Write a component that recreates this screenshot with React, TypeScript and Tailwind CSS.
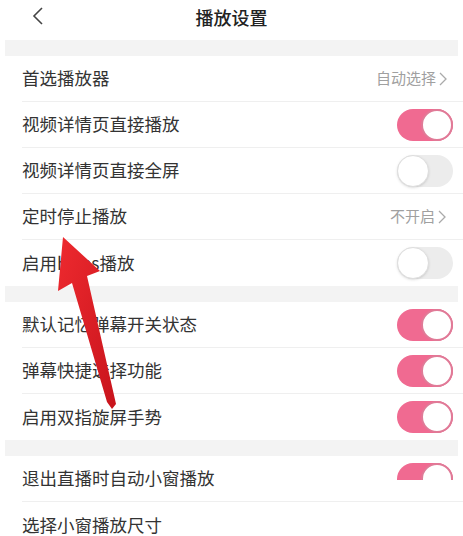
import React from "react";

function Toggle({ on }: { on: boolean }) {
  return on ? (
    <div className="relative w-[56px] h-[32px] rounded-full bg-[#f06a91]">
      <div className="absolute right-0 top-0 w-[32px] h-[32px] rounded-full bg-white border-2 border-[#e07a97]" />
    </div>
  ) : (
    <div className="relative w-[56px] h-[32px] rounded-full bg-[#ececec]">
      <div className="absolute left-0 top-0 w-[32px] h-[32px] rounded-full bg-white border border-[#dedede] shadow-sm" />
    </div>
  );
}

function Chevron() {
  return (
    <svg width="8" height="14" viewBox="0 0 8 14" className="ml-[3px]">
      <path d="M1 1 L7 7 L1 13" fill="none" stroke="#aaaaaa" strokeWidth="1.3" />
    </svg>
  );
}

function Row({
  label,
  right,
  last,
}: {
  label: string;
  right?: React.ReactNode;
  last?: boolean;
}) {
  return (
    <div className="pl-[22px]">
      <div
        className={`h-[46px] flex items-center justify-between pr-[10px] ${
          last ? "" : "border-b border-[#efefef]"
        }`}
      >
        <span className="text-[17.5px] text-[#333333]">{label}</span>
        {right}
      </div>
    </div>
  );
}

function Band() {
  return <div className="h-[16px] mx-[5px] bg-[#f3f3f3]" />;
}

export default function App() {
  return (
    <div
      className="relative w-[463px] h-[536px] overflow-hidden bg-white"
      style={{ fontFamily: '"Noto Sans CJK SC", "Noto Sans", sans-serif' }}
    >
      <div className="relative h-[40px] flex items-center justify-center">
        <svg width="12" height="18" viewBox="0 0 12 18" className="absolute left-[32px] top-[7px]">
          <path d="M10 1 L2 9 L10 17" fill="none" stroke="#444444" strokeWidth="1.6" />
        </svg>
        <span className="text-[18px] font-medium text-[#222222] -mt-[6px]">播放设置</span>
      </div>
      <Band />
      <div>
        <Row
          label="首选播放器"
          right={
            <span className="flex items-center text-[15px] text-[#a0a0a0] mr-[6px]">
              自动选择
              <Chevron />
            </span>
          }
        />
        <Row label="视频详情页直接播放" right={<Toggle on />} />
        <Row label="视频详情页直接全屏" right={<Toggle on={false} />} />
        <Row
          label="定时停止播放"
          right={
            <span className="flex items-center text-[15px] text-[#a0a0a0] mr-[7px]">
              不开启
              <Chevron />
            </span>
          }
        />
        <Row label="启用https播放" right={<Toggle on={false} />} last />
      </div>
      <Band />
      <div>
        <Row label="默认记忆弹幕开关状态" right={<Toggle on />} />
        <Row label="弹幕快捷选择功能" right={<Toggle on />} />
        <Row label="启用双指旋屏手势" right={<Toggle on />} last />
      </div>
      <Band />
      <div>
        <Row
          label="退出直播时自动小窗播放"
          right={
            <div className="h-[32px] self-start mt-[7px]">
              <div className="h-[17px] overflow-hidden">
                <Toggle on />
              </div>
            </div>
          }
        />
        <Row label="选择小窗播放尺寸" last />
      </div>

      <svg
        className="absolute left-0 top-0 pointer-events-none"
        width="463"
        height="536"
        viewBox="0 0 463 536"
      >
        <defs>
          <linearGradient id="ar" x1="0" y1="0" x2="1" y2="1">
            <stop offset="0" stopColor="#ee2a2f" />
            <stop offset="1" stopColor="#c8141c" />
          </linearGradient>
        </defs>
        <polygon
          points="63,237 100,271 87,276 116,404 112,409 107,402 72,283 58,291"
          fill="url(#ar)"
        />
      </svg>
    </div>
  );
}
